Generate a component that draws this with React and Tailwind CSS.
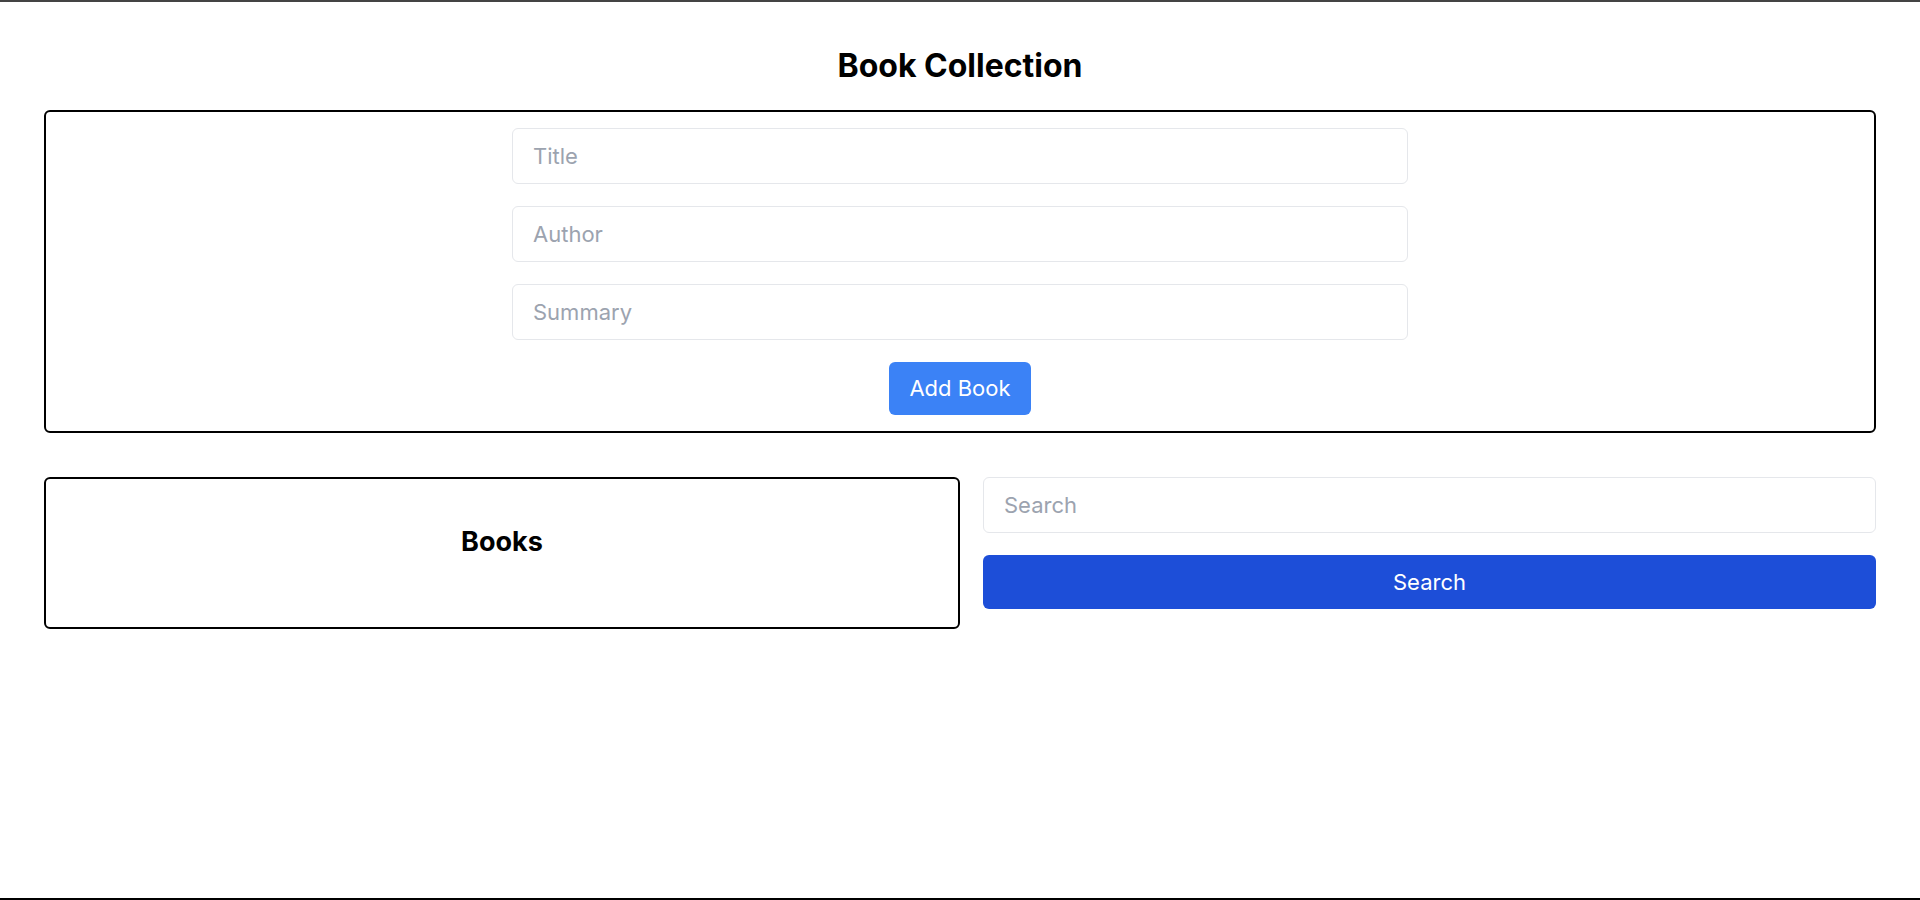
import { useState } from "react";

const inputClass =
  "w-full h-14 px-5 text-[22px] border border-[#e5e7eb] rounded-md outline-none placeholder:text-[#9ca3af] text-gray-900 mb-[22px]";

const App = () => {
  const [title, setTitle] = useState("");
  const [author, setAuthor] = useState("");
  const [summary, setSummary] = useState("");
  const [query, setQuery] = useState("");

  return (
    <div
      className="h-[900px] border-t-2 border-b-2 border-t-[#444444] border-b-black bg-white text-black"
      style={{ fontFamily: "Inter, 'Noto Sans', sans-serif" }}
    >
      <div className="px-11 pt-[45px]">
        <h1 className="text-[32px] leading-[38px] font-bold text-center mb-[25px]">
          Book Collection
        </h1>

        {/* add book form */}
        <form
          onSubmit={(e) => e.preventDefault()}
          className="border-2 border-black rounded-md p-4 flex flex-col items-center"
        >
          <input
            type="text"
            placeholder="Title"
            className={`${inputClass} max-w-4xl`}
            value={title}
            onChange={(e) => setTitle(e.target.value)}
          />
          <input
            type="text"
            placeholder="Author"
            className={`${inputClass} max-w-4xl`}
            value={author}
            onChange={(e) => setAuthor(e.target.value)}
          />
          <input
            type="text"
            placeholder="Summary"
            className={`${inputClass} max-w-4xl`}
            value={summary}
            onChange={(e) => setSummary(e.target.value)}
          />
          <button
            type="submit"
            className="h-[53px] px-5 text-[22px] bg-[#3b82f6] text-white rounded-md"
          >
            Add Book
          </button>
        </form>

        <div className="flex mt-[44px] items-start">
          <div className="w-1/2 h-[152px] border-2 border-black rounded-md pt-[47px]">
            <h2 className="text-[27px] leading-8 font-bold text-center">Books</h2>
          </div>
          <div className="flex-1 ml-[23px] flex flex-col">
            <input
              type="text"
              placeholder="Search"
              className={inputClass}
              value={query}
              onChange={(e) => setQuery(e.target.value)}
            />
            <button className="w-full h-[54px] text-[22px] bg-[#1d4ed8] text-white rounded-md">
              Search
            </button>
          </div>
        </div>
      </div>
    </div>
  );
};

export default App;
